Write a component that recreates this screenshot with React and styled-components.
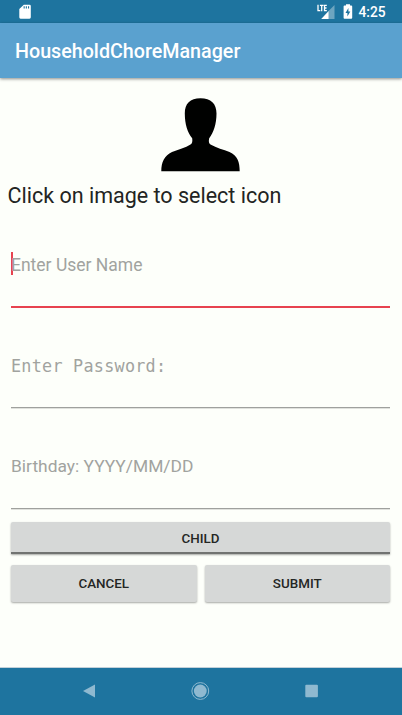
import React from "react";
import styled, { createGlobalStyle } from "styled-components";

const GlobalStyle = createGlobalStyle`
  * { box-sizing: border-box; }
  body { margin: 0; background: #fdfffa; font-family: Roboto, sans-serif; }
`;

const Screen = styled.div`
  display: flex;
  flex-direction: column;
  width: 402px;
  height: 715px;
  overflow: hidden;
  background: #fdfffa;
`;

const StatusBar = styled.header`
  display: flex;
  align-items: center;
  height: 23px;
  flex: none;
  padding: 0 15.5px 0 18px;
  background: #1e749f;
  color: #fff;
`;

const StatusIcons = styled.div`
  display: flex;
  align-items: center;
  margin-left: auto;
`;

const Clock = styled.span`
  width: 28px;
  margin-left: 6px;
  font-size: 13.8px;
  font-weight: 500;
  line-height: 23px;
  white-space: nowrap;
  padding-top: 1px;
`;

const AppBar = styled.div`
  display: flex;
  align-items: center;
  height: 54.5px;
  flex: none;
  padding: 3px 15px 0;
  background: #5aa1cf;
  box-shadow: 0 1px 3px rgba(0, 0, 0, 0.45);
`;

const Title = styled.h1`
  margin: 0;
  color: #fff;
  font-size: 19.7px;
  font-weight: 500;
  line-height: 24px;
`;

const Form = styled.main`
  display: flex;
  flex-direction: column;
  flex: 1;
  padding: 20.5px 12px 0 11px;
`;

const Avatar = styled.svg`
  display: block;
  align-self: center;
  width: 80px;
  height: 74px;
  flex: none;
  margin-right: 1px;
`;

const Prompt = styled.p`
  margin: 9px 0 0 -3.5px;
  color: #222422;
  font-size: 21.5px;
  line-height: 30px;
  white-space: nowrap;
`;

const Field = styled.label`
  display: flex;
  align-items: flex-start;
  height: 56px;
  flex: none;
  margin-top: ${(p) => p.$gap};
  border-bottom: ${(p) => (p.$focused ? "2px solid #e7434f" : "1px solid #9fa19d")};
  box-shadow: ${(p) => (p.$focused ? "none" : "0 1px 0 #e0e2dd")};
`;

const Caret = styled.span`
  width: 2px;
  height: 23px;
  margin-right: -2px;
  background: #e7434f;
`;

const Hint = styled.span`
  color: #a1a39f;
  font-family: ${(p) => (p.$mono ? '"DejaVu Sans Mono", monospace' : "Roboto, sans-serif")};
  font-size: ${(p) => p.$size};
  letter-spacing: ${(p) => (p.$mono ? "0.25px" : "normal")};
  padding-top: ${(p) => (p.$mono ? "1px" : "0")};
  line-height: 26px;
  white-space: nowrap;
`;

const Button = styled.button`
  display: flex;
  align-items: center;
  justify-content: center;
  flex: 1;
  height: 37px;
  padding: 0;
  border: 0;
  border-radius: 2px;
  background: #d6d8d7;
  box-shadow: 0 1px 2px rgba(0, 0, 0, 0.34);
  color: #242624;
  font: 500 13.4px/18px Roboto, sans-serif;
`;

const ToggleButton = styled(Button)`
  flex: none;
  height: 32px;
  margin-top: 13px;
  padding-top: 3px;
  border-bottom: 2px solid #717371;
  border-radius: 2px 2px 0 0;
`;

const Actions = styled.div`
  display: flex;
  gap: 8px;
  margin-top: 11px;
`;

const NavBar = styled.nav`
  display: flex;
  align-items: center;
  justify-content: space-between;
  height: 48px;
  flex: none;
  padding: 0 82px 1px 80px;
  border-top: 1px solid #c3d1d9;
  background: #1e749f;
`;

const NavIcon = styled.svg`
  display: block;
  width: 18px;
  height: 18px;
  overflow: visible;
  fill: #8fb9d0;
`;

function SdCard() {
  return (
    <svg width="14" height="16" viewBox="0 0 14 16">
      <path
        fill="#fff"
        fillRule="evenodd"
        d="M5.8 .7H11.5Q12.8 .7 12.8 1.9V13.3Q12.8 14.7 11.5 14.7H2.5Q1.3 14.7 1.3 13.3V5.1ZM5.6 2.3V4.6H6.7V2.3ZM7.8 2.3V4.6H8.9V2.3ZM10 2.3V4.6H11.1V2.3Z"
      />
    </svg>
  );
}

function Signal() {
  return (
    <svg width="18" height="16" viewBox="0 0 18 16">
      <path fill="#6ea5c0" d="M17.5 1V15H11.5V7Z" />
      <path fill="#fff" d="M4.2 15L11.6 7V15Z" />
      <path
        fill="none"
        stroke="#fff"
        strokeWidth="1.3"
        d="M1 .8V6.6H3.3M2.9 1.3H6.5M4.7 1.3V7.2M9.8 1.3H7.5V6.6H9.8M7.5 4H9.5"
      />
    </svg>
  );
}

function Battery() {
  return (
    <svg width="10" height="16" viewBox="0 0 10 16">
      <path fill="#fff" d="M3 .2H7V1.6H8.2Q9.2 1.6 9.2 2.6V13.7Q9.2 14.7 8.2 14.7H1.5Q.6 14.7 .6 13.7V2.6Q.6 1.6 1.5 1.6H3Z" />
      <path fill="#1e749f" d="M5.4 4V7.4H7.3L4.4 12.4V9H2.5Z" />
    </svg>
  );
}

const BatterySlot = styled.span`
  display: flex;
  margin-left: 8px;
`;

export default function App() {
  return (
    <>
      <GlobalStyle />
      <Screen>
        <StatusBar>
          <SdCard />
          <StatusIcons>
            <Signal />
            <BatterySlot><Battery /></BatterySlot>
            <Clock>4:25</Clock>
          </StatusIcons>
        </StatusBar>
        <AppBar>
          <Title>HouseholdChoreManager</Title>
        </AppBar>
        <Form>
          <Avatar viewBox="-0.5 0 80 74">
            <path
              fill="#000100"
              d="M40 .2C50.5 .2 56 5.5 56 15.5C56 26 53 34.5 48.7 40.2C48 43.5 48.3 45.5 50 46.5C56 50 63 51.5 69 54C77 57.5 79.2 64 79.2 73.2H.8C.8 64 4 57.5 11.5 54C18 51.3 25 49.7 30 46.5C32 45.2 32 43 31.7 40.2C27 34.5 24.3 26 24.3 15.5C24.3 5.5 29.5 .2 40 .2Z"
            />
          </Avatar>
          <Prompt>Click on image to select icon</Prompt>
          <Field $focused $gap="41px">
            <Caret />
            <Hint $size="17.5px">Enter User Name</Hint>
          </Field>
          <Field $gap="44px">
            <Hint $mono $size="16.8px">Enter Password:</Hint>
          </Field>
          <Field $gap="45px">
            <Hint $size="17.4px">Birthday: YYYY/MM/DD</Hint>
          </Field>
          <ToggleButton>CHILD</ToggleButton>
          <Actions>
            <Button>CANCEL</Button>
            <Button>SUBMIT</Button>
          </Actions>
        </Form>
        <NavBar>
          <NavIcon viewBox="0 0 18 18"><path d="M3 9L15 2.5V15.5Z" /></NavIcon>
          <NavIcon viewBox="0 0 18 18">
            <circle cx="9.3" cy="9" r="6.4" />
            <circle cx="9.3" cy="9" r="8.4" fill="none" stroke="#8fb9d0" strokeWidth="1" />
          </NavIcon>
          <NavIcon viewBox="0 0 18 18"><rect x="3.3" y="2.7" width="12.6" height="12.6" rx="1" /></NavIcon>
        </NavBar>
      </Screen>
    </>
  );
}
